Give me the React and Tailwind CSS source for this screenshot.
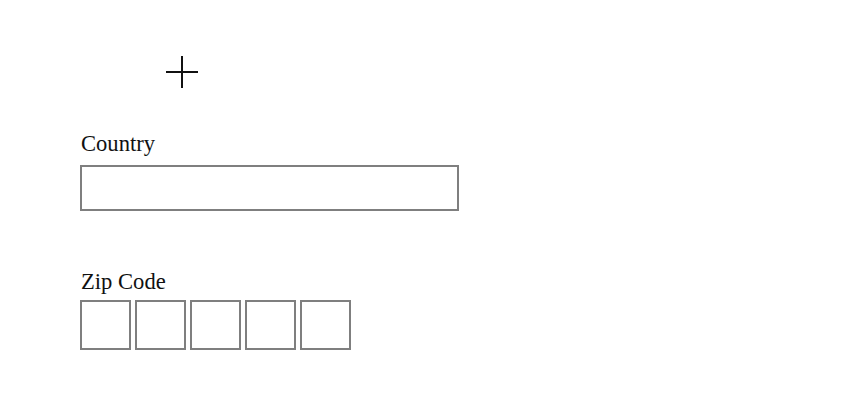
export default function App() {
  const boxes = [0, 1, 2, 3, 4];

  return (
    <div className="h-[412px] w-[854px] bg-white font-['Liberation_Serif',serif] text-[#111]">
      <div className="flex flex-col pl-[80px] pt-[56px]">
        <svg width="32" height="32" viewBox="0 0 32 32" className="ml-[86px]">
          <path d="M16 0v32M0 16h32" stroke="#111" strokeWidth="2" />
        </svg>

        <label className="mt-[43px] pl-px text-[22.6px] leading-[25px]">Country</label>
        <input
          type="text"
          className="mt-[9px] h-[46px] w-[379px] border-2 border-[#7f7f7f] bg-white outline-none"
        />

        <label className="mt-[58px] pl-px text-[22.6px] leading-[25px]">Zip Code</label>
        <div className="mt-[6px] flex gap-[4px]">
          {boxes.map((i) => (
            <input
              key={i}
              type="text"
              maxLength={1}
              className="h-[50px] w-[51px] border-2 border-[#7f7f7f] bg-white text-center outline-none"
            />
          ))}
        </div>
      </div>
    </div>
  );
}
